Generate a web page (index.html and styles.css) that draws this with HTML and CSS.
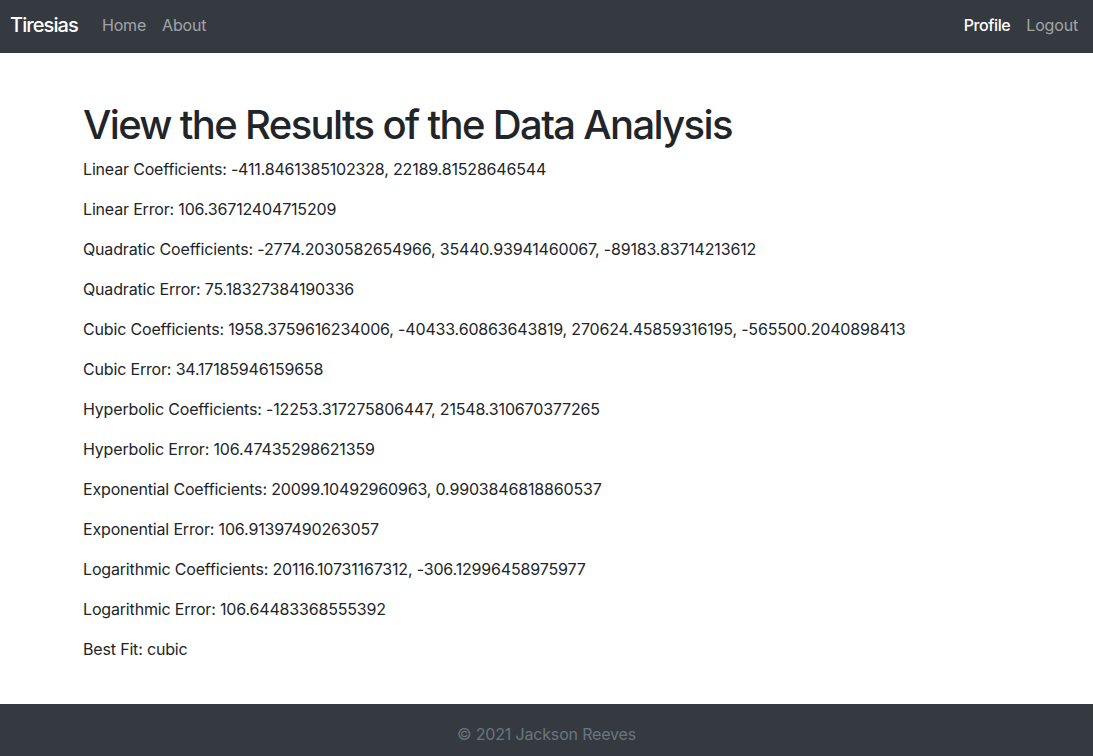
FILE: index.html
```html
<!DOCTYPE html>
<html lang="en">
<head>
<meta charset="utf-8">
<title>Tiresias</title>
<link rel="stylesheet" href="styles.css">
</head>
<body>
<nav class="navbar">
  <div class="nav-left">
    <a class="brand" href="#">Tiresias</a>
    <a class="nav-link" href="#">Home</a>
    <a class="nav-link" href="#">About</a>
  </div>
  <div class="nav-right">
    <a class="nav-link active" href="#">Profile</a>
    <a class="nav-link" href="#">Logout</a>
  </div>
</nav>
<main class="container">
  <h1>View the Results of the Data Analysis</h1>
  <p>Linear Coefficients: -411.8461385102328, 22189.81528646544</p>
  <p>Linear Error: 106.36712404715209</p>
  <p>Quadratic Coefficients: -2774.2030582654966, 35440.93941460067, -89183.83714213612</p>
  <p>Quadratic Error: 75.18327384190336</p>
  <p>Cubic Coefficients: 1958.3759616234006, -40433.60863643819, 270624.45859316195, -565500.2040898413</p>
  <p>Cubic Error: 34.17185946159658</p>
  <p>Hyperbolic Coefficients: -12253.317275806447, 21548.310670377265</p>
  <p>Hyperbolic Error: 106.47435298621359</p>
  <p>Exponential Coefficients: 20099.10492960963, 0.9903846818860537</p>
  <p>Exponential Error: 106.91397490263057</p>
  <p>Logarithmic Coefficients: 20116.10731167312, -306.12996458975977</p>
  <p>Logarithmic Error: 106.64483368555392</p>
  <p>Best Fit: cubic</p>
</main>
<footer class="footer">
  <span>&copy; 2021 Jackson Reeves</span>
</footer>
</body>
</html>
```

FILE: styles.css
```css
* { box-sizing: border-box; }
html, body { margin: 0; padding: 0; }
body {
  font-family: Inter, "Noto Sans", "Liberation Sans", sans-serif;
  font-size: 16px;
  line-height: 1.5;
  letter-spacing: -0.17px;
  color: #212529;
  background: #fff;
}
a { text-decoration: none; }
.navbar {
  background: #343a40;
  height: 53px;
  display: flex;
  align-items: center;
  justify-content: space-between;
  padding: 0 7px 4px 10px;
}
.nav-left, .nav-right { display: flex; align-items: center; }
.brand {
  color: #fff;
  font-size: 20px;
  line-height: 30px;
  margin-right: 16px;
  font-weight: 500;
  letter-spacing: -0.9px;
}
.nav-link {
  color: rgba(255,255,255,.55);
  padding: 8px;
  font-size: 16px;
  line-height: 24px;
}
.nav-link.active { color: #fff; font-weight: 500; letter-spacing: -0.4px; }
.container {
  padding: 48px 83px 27px;
}
h1 {
  font-size: 40px;
  font-weight: 500;
  line-height: 1.2;
  letter-spacing: -1.65px;
  margin: 0 0 8px;
}
p { margin: 0 0 16px; }
.footer {
  background: #343a40;
  color: #6c757d;
  text-align: center;
  padding: 18px 0 18px;
  line-height: 24px;
}
```
